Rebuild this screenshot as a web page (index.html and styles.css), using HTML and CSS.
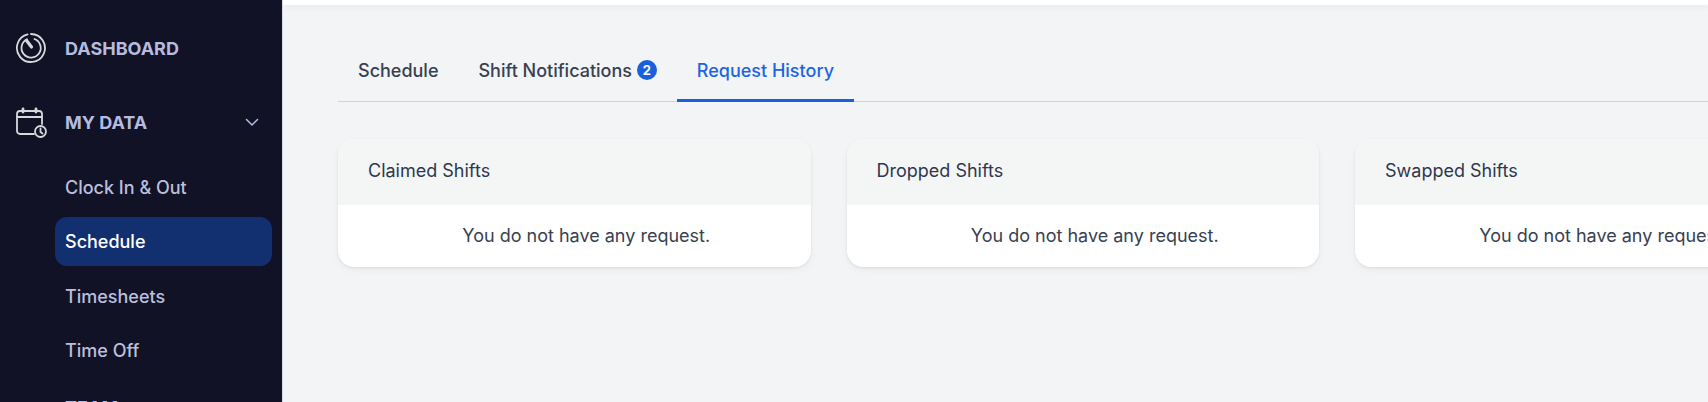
FILE: index.html
```html
<!DOCTYPE html>
<html lang="en">
<head>
    <meta charset="UTF-8">
    <meta name="viewport" content="width=device-width, initial-scale=1.0">
    <title>Request History</title>
    <link rel="stylesheet" href="styles.css">
</head>
<body>
    <div class="app">
        <aside class="sidebar">
            <a class="nav-top" href="#">
                <svg class="nav-icon" viewBox="0 0 32 32" fill="none" stroke="currentColor">
                    <path d="M12.6 2.400A14 14 0 1 0 16 2" stroke-width="1.800" stroke-linecap="round"/>
                    <path d="M12 7.300A9.600 9.600 0 1 0 19.500 7" stroke-width="1.800" stroke-linecap="round"/>
                    <path d="M11.500 8.500L16.500 15" stroke-width="3.200" stroke-linecap="round"/>
                </svg>
                <span>DASHBOARD</span>
            </a>
            <a class="nav-top nav-open" href="#">
                <svg class="nav-icon" viewBox="0 0 32 32" fill="none" stroke="currentColor" stroke-width="1.800" stroke-linecap="round">
                    <path d="M19 28H5a3 3 0 0 1-3-3V8a3 3 0 0 1 3-3h19a3 3 0 0 1 3 3v10"/>
                    <path d="M2 11h25"/>
                    <path d="M8 3v3M21 3v3" stroke-width="2.800"/>
                    <circle cx="25.500" cy="25.500" r="5.500"/>
                    <path d="M25.500 22.500v3.500l2 1.500"/>
                </svg>
                <span>MY DATA</span>
                <svg class="nav-chevron" viewBox="0 0 16 16" fill="none" stroke="currentColor" stroke-width="1.500" stroke-linecap="round" stroke-linejoin="round">
                    <path d="M2.500 5.500L8 11l5.500-5.500"/>
                </svg>
            </a>
            <ul class="subnav">
                <li><a href="#">Clock In &amp; Out</a></li>
                <li><a class="current" href="#">Schedule</a></li>
                <li><a href="#">Timesheets</a></li>
                <li><a href="#">Time Off</a></li>
            </ul>
            <a class="nav-top nav-team" href="#"><span>TEAM</span></a>
        </aside>

        <main class="main">
            <div class="topbar"></div>
            <div class="content">
                <nav class="tabs">
                    <a class="tab" href="#">Schedule</a>
                    <a class="tab" href="#">Shift Notifications <span class="badge">2</span></a>
                    <a class="tab active" href="#">Request History</a>
                </nav>
                <div class="cards">
                    <section class="card">
                        <h3 class="card-head">Claimed Shifts</h3>
                        <p class="card-body">You do not have any request.</p>
                    </section>
                    <section class="card">
                        <h3 class="card-head">Dropped Shifts</h3>
                        <p class="card-body">You do not have any request.</p>
                    </section>
                    <section class="card">
                        <h3 class="card-head">Swapped Shifts</h3>
                        <p class="card-body">You do not have any request.</p>
                    </section>
                </div>
            </div>
        </main>
    </div>
</body>
</html>
```

FILE: styles.css
```css
* {
    margin: 0;
    padding: 0;
    box-sizing: border-box;
    font-family: Inter, "Liberation Sans", sans-serif;
    font-optical-sizing: none;
}
html, body {
    height: 100%;
    overflow: hidden;
}
a {
    text-decoration: none;
    color: inherit;
}
.app {
    display: flex;
    height: 402px;
    overflow: hidden;
    background-color: #f3f4f6;
}

/* sidebar */
.sidebar {
    flex: 0 0 283px;
    height: 402px;
    padding-top: 11px;
    background-color: #111226;
    border-right: 1px solid #d9dbe0;
    overflow: hidden;
}
.nav-top {
    display: flex;
    align-items: center;
    height: 74px;
    padding: 0 22px 0 15px;
    color: #b6bbdf;
    font-size: 18px;
    font-weight: 700;
}
.nav-icon {
    flex: none;
    width: 32px;
    height: 32px;
    margin-right: 18px;
    color: #d7d8de;
}
.nav-chevron {
    flex: none;
    width: 16px;
    height: 16px;
    margin-left: auto;
    color: #b6bbdf;
}
.subnav {
    list-style: none;
    margin-top: 1px;
    padding: 0 10px 0 55px;
}
.subnav li {
    height: 54.500px;
    display: flex;
    align-items: center;
}
.subnav a {
    display: flex;
    align-items: center;
    width: 100%;
    height: 49px;
    padding-left: 10px;
    border-radius: 12px;
    color: #bcbfdc;
    font-size: 18px;
    font-weight: 500;
}
.subnav a.current {
    background-color: #123070;
    color: #ffffff;
}
.nav-team {
    padding-left: 65px;
    margin-top: -8px;
}

/* main */
.main {
    flex: 1;
    min-width: 0;
    overflow: hidden;
}
.topbar {
    height: 5px;
    background-color: #ffffff;
    box-shadow: 0 2px 6px rgba(0, 0, 0, 0.05);
}
.content {
    padding: 39px 0 0 55px;
}
.tabs {
    display: flex;
    height: 58px;
    border-bottom: 1px solid #c9d5e5;
}
.tab {
    display: flex;
    align-items: center;
    height: 58px;
    padding: 0 20px 6px;
    color: #374151;
    font-size: 18px;
    font-weight: 500;
    white-space: pre;
}
.tab.active {
    color: #1c64e4;
    border-bottom: 3px solid #1a5fdc;
    padding-bottom: 3px;
}
.badge {
    display: inline-flex;
    align-items: center;
    justify-content: center;
    width: 20px;
    height: 20px;
    border-radius: 50%;
    background-color: #1a5fdc;
    color: #ffffff;
    font-size: 13px;
    font-weight: 700;
}
.cards {
    display: flex;
    gap: 36px;
    margin-top: 37px;
}
.card {
    flex: 0 0 472.500px;
    background-color: #ffffff;
    border-radius: 16px;
    box-shadow: 0 1px 3px rgba(0, 0, 0, 0.08), 0 4px 10px rgba(0, 0, 0, 0.03);
    overflow: hidden;
}
.card-head {
    height: 66px;
    padding-left: 30px;
    line-height: 64px;
    background-color: #f4f6f6;
    color: #2f3650;
    font-size: 18px;
    font-weight: 400;
}
.card-body {
    height: 62px;
    padding-left: 24px;
    line-height: 62px;
    text-align: center;
    color: #374151;
    font-size: 18px;
    font-weight: 400;
}
```
